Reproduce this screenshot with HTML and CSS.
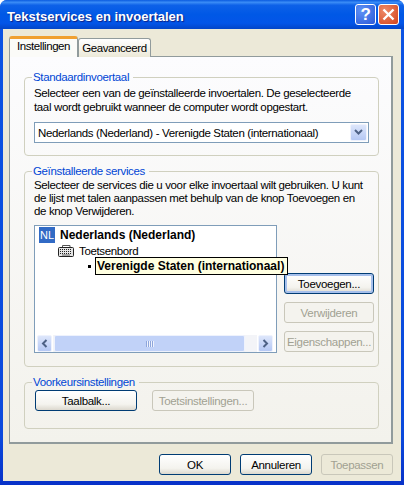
FILE: index.html
```html
<!DOCTYPE html>
<html lang="nl">
<head>
    <meta charset="UTF-8"/>
    <title>Tekstservices en invoertalen</title>
    <link rel="stylesheet" href="styles.css">
</head>
<body>

<div class="window">
    <div class="title_bar">
        <span class="title_text">Tekstservices en invoertalen</span>
        <div class="title_button help_button">?</div>
        <div class="title_button close_button">
            <svg width="13" height="13" viewBox="0 0 13 13">
                <path d="M1.5 1.5 L11.5 11.5 M11.5 1.5 L1.5 11.5" stroke="#fff" stroke-width="2.4" fill="none"/>
            </svg>
        </div>
    </div>

    <div class="dialog_body">
        <div class="tab_row">
            <div class="tab tab_active">Instellingen</div>
            <div class="tab">Geavanceerd</div>
        </div>

        <div class="tab_panel">
            <fieldset class="group group_language">
                <legend>Standaardinvoertaal</legend>
                <p>Selecteer een van de geïnstalleerde invoertalen. De geselecteerde<br>taal wordt gebruikt wanneer de computer wordt opgestart.</p>
                <div class="combo">
                    <span class="combo_text">Nederlands (Nederland) - Verenigde Staten (internationaal)</span>
                    <div class="combo_arrow">
                        <svg width="9" height="7" viewBox="0 0 9 7">
                            <path d="M1 1 L4.5 4.5 L8 1" stroke="#4d6185" stroke-width="2" fill="none"/>
                        </svg>
                    </div>
                </div>
            </fieldset>

            <fieldset class="group group_services">
                <legend>Geïnstalleerde services</legend>
                <p>Selecteer de services die u voor elke invoertaal wilt gebruiken. U kunt<br>de lijst met talen aanpassen met behulp van de knop Toevoegen en<br>de knop Verwijderen.</p>
                <div class="services_row">
                    <div class="tree_box">
                        <div class="tree_area">
                            <div class="tree_row">
                                <span class="lang_icon">NL</span>
                                <b>Nederlands (Nederland)</b>
                            </div>
                            <div class="tree_row tree_level2">
                                <svg class="keyboard_icon" width="16" height="13" viewBox="0 0 16 13">
                                    <path d="M4.5 3 V1.5 H12 V3" stroke="#555" fill="none"/>
                                    <rect x="0.5" y="3.5" width="15" height="9" rx="1" fill="#e4e4e4" stroke="#222"/>
                                    <path d="M2 5.5 H14 M2 7.5 H14 M2 9.5 H14" stroke="#222" stroke-dasharray="1 1"/>
                                    <path d="M4 11 H12" stroke="#666"/>
                                </svg>
                                <span>Toetsenbord</span>
                            </div>
                            <div class="tree_row tree_level3">
                                <span class="bullet"></span>
                            </div>
                            <div class="tree_tip">Verenigde Staten (internationaal)</div>
                        </div>
                        <div class="scrollbar">
                            <div class="scroll_btn">
                                <svg width="7" height="9" viewBox="0 0 7 9"><path d="M5.5 1 L2 4.5 L5.5 8" stroke="#4d6185" stroke-width="2" fill="none"/></svg>
                            </div>
                            <div class="scroll_track">
                                <div class="scroll_thumb"><span class="thumb_grip"></span></div>
                            </div>
                            <div class="scroll_btn">
                                <svg width="7" height="9" viewBox="0 0 7 9"><path d="M1.5 1 L5 4.5 L1.5 8" stroke="#4d6185" stroke-width="2" fill="none"/></svg>
                            </div>
                        </div>
                    </div>
                    <div class="services_buttons">
                        <button class="btn btn_focus">Toevoegen...</button>
                        <button class="btn" disabled>Verwijderen</button>
                        <button class="btn" disabled>Eigenschappen...</button>
                    </div>
                </div>
            </fieldset>

            <fieldset class="group group_prefs">
                <legend>Voorkeursinstellingen</legend>
                <div class="prefs_row">
                    <button class="btn btn_wide">Taalbalk...</button>
                    <button class="btn btn_wide" disabled>Toetsinstellingen...</button>
                </div>
            </fieldset>
        </div>

        <div class="dialog_buttons">
            <button class="btn btn_dialog">OK</button>
            <button class="btn btn_dialog">Annuleren</button>
            <button class="btn btn_dialog" disabled>Toepassen</button>
        </div>
    </div>
</div>

</body>
</html>
```

FILE: styles.css
```css
* {
    box-sizing: border-box;
}

html, body {
    margin: 0;
    padding: 0;
}

body {
    font-family: 'Liberation Sans', Arial, sans-serif;
    font-size: 11.5px;
    letter-spacing: -0.36px;
    color: #000;
}

b {
    font-size: 12px;
    letter-spacing: 0;
}

.window {
    width: 404px;
    height: 485px;
    display: flex;
    flex-direction: column;
    background: linear-gradient(to bottom, #0c54e4, #0a49dc 90%, #0831c8);
    padding: 0 3px 4px 3px;
    border-radius: 7px 7px 0 0;
    overflow: hidden;
}

.title_bar {
    height: 29px;
    margin: 0 -3px;
    padding: 0 5px 0 7px;
    display: flex;
    align-items: center;
    background: linear-gradient(to bottom, #0a5be0 0%, #3a8cf6 8%, #0d61e8 18%, #0058e6 50%, #0355e8 80%, #0345c8 100%);
}

.title_text {
    flex: 1;
    padding-top: 3px;
    color: #fff;
    font-weight: bold;
    font-size: 13px;
    letter-spacing: 0;
    text-shadow: 1px 1px 1px #0f1f80;
}

.title_button {
    width: 21px;
    height: 21px;
    margin-left: 2px;
    border: 1px solid #fff;
    border-radius: 3px;
    display: flex;
    align-items: center;
    justify-content: center;
    color: #fff;
    font-weight: bold;
    font-size: 17px;
}

.help_button {
    background: radial-gradient(circle at 30% 30%, #5f92f5, #2a58d8);
}

.close_button {
    background: radial-gradient(circle at 30% 30%, #ee8a68, #d2431c);
}

.dialog_body {
    flex: 1;
    background: #ece9d8;
    padding: 7px 8px 0 6px;
}

.tab_row {
    display: flex;
    height: 20px;
}

.tab {
    height: 19px;
    margin-top: 2px;
    width: 73px;
    text-align: center;
    letter-spacing: -0.42px;
    background: linear-gradient(to bottom, #fff, #ece9d8);
    border: 1px solid #919b9c;
    border-bottom: none;
    border-radius: 3px 3px 0 0;
    line-height: 19px;
}

.tab_active {
    height: 21px;
    margin-top: 0;
    width: 69px;
    background: #fbfbf8;
    border-top: 3px solid #f0a030;
    line-height: 15px;
    position: relative;
    z-index: 1;
}

.tab_panel {
    height: 388px;
    padding: 13px 12px 0 14px;
    border: 1px solid #919b9c;
    border-right: 2px solid #919b9c;
    border-bottom: 2px solid #919b9c;
    background: linear-gradient(to bottom, #fcfcfe, #f3f2ec);
}

.group {
    margin: 0;
    padding: 0 9px;
    border: 1px solid #d0d0bf;
    border-radius: 4px;
    min-width: 0;
}

.group legend {
    color: #0046d5;
    padding: 0 4px 0 1px;
    margin-left: -2px;
    line-height: 14px;
}

.group p {
    margin: 0;
    line-height: 14px;
    white-space: nowrap;
}

.group_language {
    height: 86px;
    padding-top: 2px;
}

.group_services {
    height: 203px;
    margin-top: 8px;
    padding-top: 1px;
}

.group_services p {
    line-height: 13px;
}

.group_prefs {
    height: 54px;
    margin-top: 8px;
}

.combo {
    height: 21px;
    margin-top: 8px;
    display: flex;
    align-items: center;
    background: #fff;
    border: 1px solid #7f9db9;
    padding-left: 3px;
}

.combo_text {
    flex: 1;
    white-space: nowrap;
}

.combo_arrow,
.scroll_btn {
    display: flex;
    align-items: center;
    justify-content: center;
    background: linear-gradient(to bottom, #dde6fb, #b5c8f4);
    border: 1px solid #eef2fd;
    border-radius: 2px;
}

.combo_arrow {
    width: 17px;
    height: 17px;
    margin-right: 1px;
}

.services_row {
    display: flex;
    margin-top: 7px;
}

.tree_box {
    flex: none;
    width: 243px;
    height: 128px;
    border: 1px solid #7f9db9;
    background: #fff;
    display: flex;
    flex-direction: column;
}

.tree_area {
    flex: 1;
    position: relative;
    padding: 1px 0 0 4px;
}

.tree_row {
    height: 16px;
    display: flex;
    align-items: center;
}

.tree_level2 {
    height: 15px;
    padding-left: 19px;
}

.tree_level3 {
    padding-left: 49px;
}

.lang_icon {
    width: 16px;
    height: 16px;
    margin-right: 5px;
    background: #316ac5;
    color: #fff;
    font-size: 11px;
    letter-spacing: 0;
    line-height: 16px;
    text-align: center;
}

.keyboard_icon {
    margin-right: 5px;
}

.bullet {
    width: 3px;
    height: 3px;
    background: #000;
}

.tree_tip {
    position: absolute;
    left: 60px;
    top: 31px;
    width: 193px;
    height: 18px;
    line-height: 16px;
    padding-left: 1px;
    font-size: 12px;
    letter-spacing: 0;
    font-weight: bold;
    white-space: nowrap;
    background: #ffffe1;
    border: 1px solid #000;
}

.scrollbar {
    height: 17px;
    margin: 0 3px 0 2px;
    display: flex;
    gap: 1px;
}

.scroll_btn {
    flex: none;
    width: 15px;
}

.scroll_track {
    flex: 1;
    padding-left: 1px;
    background: #f3f4f8;
}

.scroll_thumb {
    width: 191px;
    height: 100%;
    display: flex;
    align-items: center;
    justify-content: center;
    background: #c1d2f8;
    border: 1px solid #eef2fd;
    border-radius: 2px;
}

.thumb_grip {
    width: 8px;
    height: 6px;
    background: repeating-linear-gradient(to right, #8ea6dc 0, #8ea6dc 1px, #eef2fd 1px, #eef2fd 2px);
}

.services_buttons {
    flex: none;
    margin-left: 7px;
    padding-top: 48px;
    display: flex;
    flex-direction: column;
    gap: 8px;
}

.btn {
    width: 90px;
    height: 21px;
    padding: 0;
    font-family: inherit;
    font-size: 11.5px;
    letter-spacing: -0.3px;
    color: #000;
    background: linear-gradient(to bottom, #fff, #f4f3ee 70%, #dcd8ce);
    border: 1px solid #003c74;
    border-radius: 3px;
}

.btn:disabled {
    color: #a1a192;
    background: #f4f3ee;
    border-color: #c9c7ba;
}

.btn_focus {
    box-shadow: inset 0 0 0 2px #a6c0ec;
}

.btn_wide {
    width: 102px;
}

.prefs_row {
    display: flex;
    gap: 15px;
    padding: 1px 0 0 1px;
}

.dialog_buttons {
    display: flex;
    justify-content: flex-end;
    gap: 9px;
    margin-top: 10px;
}

.btn_dialog {
    width: 72px;
}

.btn_dialog:disabled {
    background: #ece9d8;
}
```
